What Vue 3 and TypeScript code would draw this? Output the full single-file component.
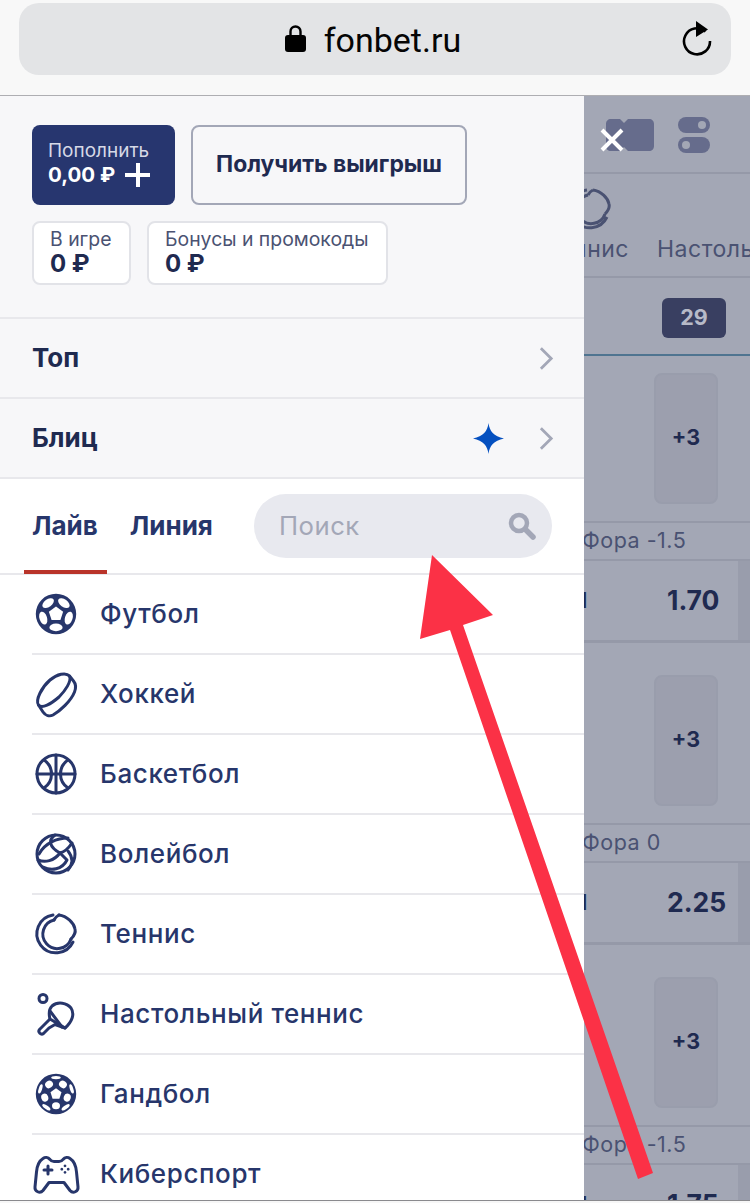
<script setup lang="ts">
interface Sport {
  name: string
  strokes: string[]
  fills: string[]
  holes: string[]
}

const circle = 'M21 2a19 19 0 1 0 0 38a19 19 0 1 0 0-38Z'
const disc = 'M21 0.8a20.2 20.2 0 1 0 0 40.4a20.2 20.2 0 1 0 0-40.4Z'

function ell(cx: number, cy: number, rx: number, ry: number, rot: number): string {
  const a = (rot * Math.PI) / 180
  const dx = rx * Math.cos(a)
  const dy = rx * Math.sin(a)
  const start = `${(cx - dx).toFixed(2)} ${(cy - dy).toFixed(2)}`
  const end = `${(cx + dx).toFixed(2)} ${(cy + dy).toFixed(2)}`
  return `M${start}A${rx} ${ry} ${rot} 1 0 ${end}A${rx} ${ry} ${rot} 1 0 ${start}Z`
}

function polar(r: number, deg: number): [number, number] {
  const a = (deg * Math.PI) / 180
  return [21 + r * Math.cos(a), 21 + r * Math.sin(a)]
}

function ring(r: number, offset: number, rx: number, ry: number): string[] {
  return [0, 72, 144, 216, 288].map((step) => {
    const deg = offset + step
    const [x, y] = polar(r, deg)
    return ell(x, y, rx, ry, deg + 90)
  })
}

function pentagon(r: number): string {
  const pts = [-90, -18, 54, 126, 198].map((deg) => polar(r, deg).map((n) => n.toFixed(2)).join(' '))
  return `M${pts.join('L')}Z`
}

const sports: Sport[] = [
  {
    name: 'Футбол',
    strokes: [],
    fills: [disc],
    holes: [pentagon(7.5), ...ring(13.4, 18, 6.6, 3.8)],
  },
  {
    name: 'Хоккей',
    strokes: [
      'M3.5 32C0 27 7 14 15 7C22 1 31 -1 34.5 3C37 8 30 18 24 24C16 31 7 36 3.5 32Z',
      'M3.5 32L8 39C10 42 14 44 18 42C25 38 36 28 39.5 19C41 15 41 11 38.5 8L34.5 3',
    ],
    fills: [],
    holes: [],
  },
  {
    name: 'Баскетбол',
    strokes: [
      circle,
      'M21 2V40M2 21H40',
      'M9 7C15 11 16.5 16 16.5 21C16.5 26 15 31 9 35',
      'M33 7C27 11 25.5 16 25.5 21C25.5 26 27 31 33 35',
    ],
    fills: [],
    holes: [],
  },
  {
    name: 'Волейбол',
    strokes: [
      circle,
      'M4 21C10 10 22 5 33 5',
      'M20 2C13 7 14 14 25 20',
      'M3 27C10 30 19 28 25 20',
      'M8 34C16 38 27 37 32 27L25 20',
      'M25 20C29 19 33 16 37 10',
      'M33 37C38 31 38 24 33 18',
    ],
    fills: [],
    holes: [],
  },
  {
    name: 'Теннис',
    strokes: [
      'M18 2A19 19 0 1 0 38 29',
      'M19 7A14.5 14.5 0 1 0 36 26',
      'M36 26C38 24 41 20 40 16C39 10 32 3 24 2',
      'M19 7C20 5 22 3 24 2',
    ],
    fills: [],
    holes: [],
  },
  {
    name: 'Настольный теннис',
    strokes: [
      'M8 1.5a4 4 0 1 0 0 8a4 4 0 1 0 0-8Z',
      'M17 13C23 8 32 10 36 15C40 21 37 29 30 35L15 26C14 22 14 16 17 13Z',
      'M15 26L10 31L4.5 36.5C2.5 39 6 42.5 8.5 40.5L14 35L20 31.5L30 35',
      'M15 18L27 34',
    ],
    fills: [],
    holes: [],
  },
  {
    name: 'Гандбол',
    strokes: [],
    fills: [disc],
    holes: [pentagon(5.8), ...ring(11.8, 18, 4, 3.5), ...ring(16.4, -18, 4.8, 1.7)],
  },
  {
    name: 'Киберспорт',
    strokes: [
      'M8 5.5C10 4 13 4 15 6.5C16 8 17 8.5 19 8.5H24C26 8.5 27 8 28 6.5C30 4 33 4 35 5.5C39 8 41 13 41.5 19L43 34C43.5 38.5 38 41 35 37.5L29 29.5H14L8 37.5C5 41 -0.5 38.5 0 34L1.5 19C2 13 4 8 8 5.5Z',
      'M9 17H17M13 13V21',
    ],
    fills: [
      'M30 11.5a1.4 1.4 0 1 0 0.01 0Z',
      'M30 18a1.4 1.4 0 1 0 0.01 0Z',
      'M26.8 14.8a1.4 1.4 0 1 0 0.01 0Z',
      'M33.2 14.8a1.4 1.4 0 1 0 0.01 0Z',
    ],
    holes: [],
  },
]

interface Market {
  label: string
  odds: string
}

const markets: Market[] = [
  { label: 'Фора -1.5', odds: '1.70' },
  { label: 'Фора 0', odds: '2.25' },
  { label: 'Фора -1.5', odds: '1.75' },
]
</script>

<template>
  <div class="page">
    <header class="browser">
      <div class="urlbar">
        <div class="address">
          <svg class="lock" viewBox="0 0 21 28" width="21" height="28">
            <path d="M5.5 12V7.5a5 5 0 0 1 10 0V12" fill="none" stroke="#000" stroke-width="2.4" />
            <rect x="0" y="11" width="21" height="17" rx="3" fill="#000" />
          </svg>
          <span class="domain">fonbet.ru</span>
        </div>
        <svg class="reload" viewBox="0 0 32 36" width="32" height="36">
          <path d="M24.5 12.5A13 13 0 1 0 29 22" fill="none" stroke="#000" stroke-width="2.6" transform="translate(-1 -1)" />
          <path d="M14 1L26 9.5L14 17Z" fill="#000" />
        </svg>
      </div>
    </header>

    <main class="viewport">
      <aside class="drawer">
        <section class="wallet">
          <div class="actions">
            <button class="deposit">
              <span class="deposit-label">Пополнить</span>
              <span class="deposit-sum">0,00 ₽<i class="plus"></i></span>
            </button>
            <button class="withdraw">Получить выигрыш</button>
          </div>
          <div class="balances">
            <div class="balance balance-game">
              <span class="balance-label">В игре</span>
              <b class="balance-value">0 ₽</b>
            </div>
            <div class="balance balance-bonus">
              <span class="balance-label">Бонусы и промокоды</span>
              <b class="balance-value">0 ₽</b>
            </div>
          </div>
        </section>

        <div class="menu-row">
          <span class="menu-title">Топ</span>
          <svg class="chevron" viewBox="0 0 16 26" width="15" height="25">
            <path d="M2 2L13 13L2 24" fill="none" stroke="#a3a7b7" stroke-width="3" />
          </svg>
        </div>
        <div class="menu-row">
          <span class="menu-title">Блиц</span>
          <svg class="star" viewBox="0 0 30 30" width="31" height="31">
            <path d="M15 0C16 8 20 13 30 15C20 17 16 22 15 30C14 22 10 17 0 15C10 13 14 8 15 0Z" fill="#0550c0" />
          </svg>
          <svg class="chevron" viewBox="0 0 16 26" width="15" height="25">
            <path d="M2 2L13 13L2 24" fill="none" stroke="#a3a7b7" stroke-width="3" />
          </svg>
        </div>

        <div class="tabs">
          <span class="tab tab-active">Лайв</span>
          <span class="tab">Линия</span>
          <div class="search">
            <span class="search-text">Поиск</span>
            <svg viewBox="0 0 28 28" width="28" height="28">
              <circle cx="11" cy="11" r="8" fill="none" stroke="#a3a7b7" stroke-width="4.5" />
              <path d="M18 18L25 25" stroke="#a3a7b7" stroke-width="5.5" stroke-linecap="round" />
            </svg>
          </div>
        </div>

        <ul class="sports">
          <li v-for="sport in sports" :key="sport.name" class="sport">
            <svg class="sport-icon" viewBox="0 0 42 42" width="42" height="42">
              <path v-for="d in sport.strokes" :key="d" :d="d" fill="none" stroke="#27366b" stroke-width="3" stroke-linejoin="round" stroke-linecap="round" />
              <path v-for="d in sport.fills" :key="d" :d="d" fill="#27366b" />
              <path v-for="d in sport.holes" :key="d" :d="d" fill="#fff" />
            </svg>
            <span class="sport-name">{{ sport.name }}</span>
          </li>
        </ul>
      </aside>

      <div class="backdrop">
        <div class="toolbar">
          <svg viewBox="0 0 48 32" width="48" height="32">
            <path d="M5 0H14L18 4L22 0H43C46 0 48 2 48 5V27C48 30 46 32 43 32H22L18 28L14 32H5C2 32 0 30 0 27V5C0 2 2 0 5 0Z" fill="#666c8c" />
          </svg>
          <svg viewBox="0 0 32 36" width="32" height="36">
            <rect x="0" y="0" width="32" height="16" rx="8" fill="#666c8c" />
            <rect x="0" y="20" width="32" height="16" rx="8" fill="#666c8c" />
            <circle cx="24" cy="8" r="4" fill="#a3a7b5" />
            <circle cx="8" cy="28" r="4" fill="#a3a7b5" />
          </svg>
        </div>
        <nav class="sport-nav">
          <div class="nav-item nav-tennis">
            <svg class="nav-icon" viewBox="0 0 42 42" width="42" height="42">
              <path d="M18 2A19 19 0 1 0 38 29M19 7A14.5 14.5 0 1 0 36 26M36 26C38 24 41 20 40 16C39 10 32 3 24 2M19 7C20 5 22 3 24 2" fill="none" stroke="#4a5272" stroke-width="3" />
            </svg>
            <span>Теннис</span>
          </div>
          <span class="nav-item nav-next">Настольный</span>
        </nav>
        <div class="score-row">
          <span class="score-badge">29</span>
        </div>
        <div v-for="market in markets" :key="market.odds" class="event">
          <div class="event-body">
            <div class="more">+3</div>
          </div>
          <div class="market-label">{{ market.label }}</div>
          <div class="odds-row">
            <span class="side">1</span>
            <b class="odds">{{ market.odds }}</b>
            <i class="odds-next"></i>
          </div>
        </div>
        <button class="close" aria-label="Закрыть">
          <svg viewBox="0 0 24 24" width="24" height="24">
            <path d="M2 2L22 22M22 2L2 22" stroke="#fff" stroke-width="4" />
          </svg>
        </button>
      </div>

      <svg class="arrow" viewBox="0 0 750 1104" width="750" height="1104">
        <path d="M432 459L493 519L463 529L653 1077L638 1083L450 534L420 543Z" fill="#fb3146" />
      </svg>
    </main>
    <div class="home-edge"></div>
  </div>
</template>

<style>
html, body { margin: 0; background: #f7f7f7; }
</style>

<style scoped>
.page {
  width: 750px;
  height: 1203px;
  overflow: hidden;
  display: flex;
  flex-direction: column;
  font-family: Inter, "Noto Sans", sans-serif;
  color: #27366b;
}
.browser {
  flex: none;
  height: 96px;
  padding-top: 3px;
  box-sizing: border-box;
  background: #f8f8f8;
  border-bottom: 1px solid #aeaeb2;
}
.urlbar {
  margin: 0 19px;
  height: 72px;
  border-radius: 20px;
  background: #e3e4e6;
  display: flex;
  align-items: center;
  justify-content: center;
  position: relative;
}
.address { display: flex; align-items: center; gap: 18px; margin-top: -2px; margin-left: -4px; }
.lock { display: block; }
.domain {
  font: 400 34px Roboto, Inter, sans-serif;
  color: #050505;
  padding-top: 3px;
}
.reload { position: absolute; right: 17px; top: 17px; }

.viewport { flex: 1; display: flex; position: relative; min-height: 0; overflow: hidden; }

.drawer {
  width: 584px;
  flex: none;
  background: #fff;
  display: flex;
  flex-direction: column;
  overflow: hidden;
}
.wallet {
  flex: none;
  height: 221px;
  box-sizing: border-box;
  padding: 29px 32px 0;
  background: #f7f7f9;
}
.actions { display: flex; gap: 16px; }
.deposit {
  width: 143px;
  height: 80px;
  padding: 15px 0 0 16px;
  box-sizing: border-box;
  border: 0;
  border-radius: 8px;
  background: #27366f;
  color: #fff;
  font-family: inherit;
  text-align: left;
  display: flex;
  flex-direction: column;
}
.deposit-label { font-size: 19px; line-height: 21px; color: #d6d9e6; white-space: nowrap; }
.deposit-sum {
  font-size: 20.5px;
  font-weight: 700;
  line-height: 28px;
  display: flex;
  align-items: center;
}
.plus {
  width: 25px;
  height: 24px;
  margin-left: 10px;
  background: linear-gradient(#fff, #fff) center / 100% 4px no-repeat,
    linear-gradient(#fff, #fff) center / 4px 100% no-repeat;
}
.withdraw {
  width: 276px;
  height: 80px;
  box-sizing: border-box;
  border: 2px solid #a3a7b7;
  border-radius: 8px;
  background: #f7f7f9;
  color: #1f2a50;
  font: 700 22.9px Inter, sans-serif;
  white-space: nowrap;
  padding: 0 0 2px;
}
.balances { display: flex; gap: 16px; margin-top: 16px; }
.balance {
  height: 64px;
  box-sizing: border-box;
  border: 2px solid #e2e3e8;
  border-radius: 8px;
  background: #fff;
  display: flex;
  flex-direction: column;
  padding: 6px 0 0 16px;
}
.balance-game { width: 99px; }
.balance-bonus { width: 241px; }
.balance-label { font-size: 19.4px; line-height: 21px; color: #4a5272; white-space: nowrap; }
.balance-value { font-size: 24px; line-height: 27px; color: #1f2a50; }

.menu-row {
  flex: none;
  height: 80px;
  box-sizing: border-box;
  border-top: 2px solid #e8e8ec;
  background: #f7f7f9;
  padding: 0 30px 0 32px;
  display: flex;
  align-items: center;
}
.menu-title {
  flex: 1;
  font-size: 26px;
  font-weight: 700;
  color: #1f2a50;
  padding-bottom: 2px;
}
.star { margin-right: 35px; }

.tabs {
  flex: none;
  height: 98px;
  box-sizing: border-box;
  border-top: 2px solid #e8e8ec;
  border-bottom: 2px solid #e8e8ec;
  padding: 0 32px;
  display: flex;
  align-items: center;
  position: relative;
}
.tab {
  font-size: 26px;
  font-weight: 700;
  color: #27366b;
  margin-right: 32px;
  position: relative;
  align-self: stretch;
  display: flex;
  align-items: center;
  padding-bottom: 2px;
}
.tab-active::after {
  content: "";
  position: absolute;
  left: -8px;
  right: -9px;
  bottom: -1px;
  height: 4px;
  background: #b9342a;
}
.search {
  position: absolute;
  left: 254px;
  top: 15px;
  width: 298px;
  height: 64px;
  box-sizing: border-box;
  border-radius: 32px;
  background: #e8e9ef;
  padding: 0 16px 0 25px;
  display: flex;
  align-items: center;
  justify-content: space-between;
}
.search-text { font-size: 25.7px; color: #a3a7b7; letter-spacing: 0.5px; padding-bottom: 2px; }

.sports { list-style: none; margin: 0; padding: 0 0 0 32px; }
.sport {
  height: 80px;
  box-sizing: border-box;
  border-bottom: 2px solid #e8e8ec;
  display: flex;
  align-items: center;
}
.sport-icon { margin-left: 3px; flex: none; overflow: visible; }
.sport-name {
  margin-left: 23px;
  font-size: 26px;
  font-weight: 500;
  letter-spacing: 0.6px;
  color: #27366b;
  padding-bottom: 2px;
}

.backdrop {
  flex: 1;
  min-width: 0;
  position: relative;
  overflow: hidden;
  background: #a3a7b5;
}
.toolbar {
  height: 78px;
  box-sizing: border-box;
  border-bottom: 2px solid #9599a8;
  display: flex;
  align-items: center;
  gap: 24px;
  padding: 2px 0 0 22px;
}
.sport-nav {
  height: 104px;
  box-sizing: border-box;
  border-bottom: 2px solid #9599a8;
  display: flex;
  align-items: flex-end;
  padding-bottom: 13px;
  margin-left: -49px;
  white-space: nowrap;
}
.nav-item { font-size: 23px; color: #4a5272; letter-spacing: 0.5px; }
.nav-tennis {
  display: flex;
  flex-direction: column;
  align-items: flex-end;
  width: 94px;
  flex: none;
  gap: 5px;
}
.nav-icon { margin-right: 18px; }
.nav-next { margin-left: 28px; }
.score-row {
  height: 78px;
  box-sizing: border-box;
  border-bottom: 2px solid #4f7490;
  padding: 20px 0 0 78px;
}
.score-badge {
  display: flex;
  width: 64px;
  height: 40px;
  align-items: center;
  justify-content: center;
  border-radius: 6px;
  background: #393f61;
  color: #b7bac8;
  font-size: 21.5px;
  font-weight: 700;
  padding-bottom: 2px;
  box-sizing: border-box;
}
.event { height: 302px; box-sizing: border-box; padding-top: 17px; }
.event-body { height: 148px; }
.more {
  margin-left: 70px;
  width: 64px;
  height: 131px;
  box-sizing: border-box;
  border: 2px solid #999dac;
  border-radius: 8px;
  background: #9c9fae;
  display: flex;
  align-items: center;
  justify-content: center;
  color: #1f2a50;
  font-size: 21.5px;
  font-weight: 700;
  padding-bottom: 4px;
}
.market-label {
  height: 40px;
  box-sizing: border-box;
  border-top: 2px solid #9599a8;
  border-bottom: 2px solid #9599a8;
  display: flex;
  align-items: center;
  font-size: 21.5px;
  color: #4a5272;
  letter-spacing: 0.5px;
  padding: 0 0 2px 0;
  white-space: nowrap;
  text-indent: -2px;
}
.odds-row {
  height: 82px;
  box-sizing: border-box;
  border-bottom: 3px solid #9599a8;
  display: flex;
  align-items: center;
  position: relative;
}
.side {
  position: absolute;
  left: -6px;
  font-size: 21.5px;
  font-weight: 700;
  color: #1f2a50;
  padding-bottom: 2px;
}
.odds {
  margin-left: 83px;
  font-size: 26.5px;
  color: #1f2a50;
  padding-bottom: 2px;
}
.odds-next {
  position: absolute;
  left: 154px;
  top: 0;
  bottom: 0;
  width: 12px;
  background: #999dac;
}
.close {
  position: absolute;
  left: 16px;
  top: 32px;
  width: 24px;
  height: 24px;
  padding: 0;
  border: 0;
  background: none;
}
.close svg { display: block; }
.arrow { position: absolute; left: 0; top: 0; pointer-events: none; }
.home-edge { flex: none; height: 3px; background: #f7f7f7; border-top: 1px solid #8a8a8e; box-sizing: border-box; }
</style>
